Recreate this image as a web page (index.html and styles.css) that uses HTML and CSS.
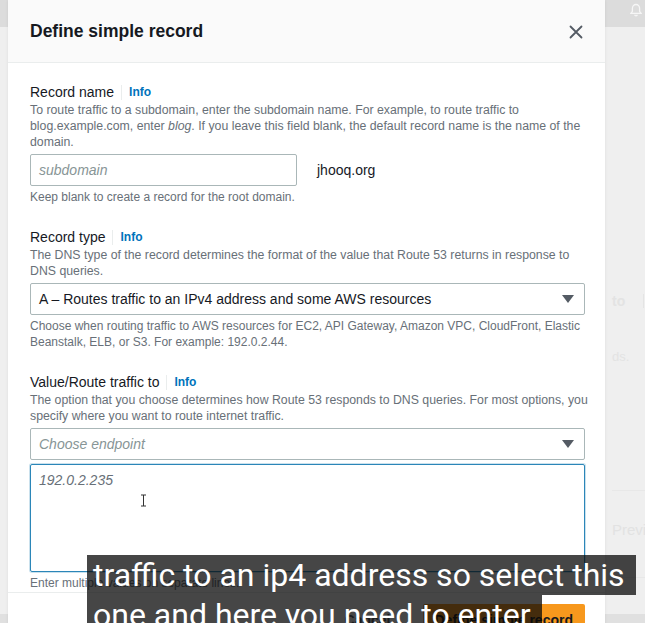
FILE: index.html
```html
<!DOCTYPE html>
<html lang="en">
<head>
<meta charset="utf-8">
<title>Define simple record</title>
<link rel="stylesheet" href="styles.css">
</head>
<body>
<div class="page">
  <div class="topbar">
    <svg class="bell" width="12" height="14" viewBox="0 0 12 14"><path d="M6 1.5c-2.2 0-3.6 1.7-3.6 3.8v3L1 10.3h10L9.6 8.3v-3C9.6 3.2 8.2 1.5 6 1.5z" fill="none" stroke="#f6f6f6" stroke-width="1.3"/><path d="M4.6 11.8c.3.7.8 1 1.4 1s1.1-.3 1.4-1" fill="none" stroke="#f6f6f6" stroke-width="1.3"/></svg>
  </div>
  <div class="ghost">
    <div class="ghost-label">to <span class="ghost-sep"></span></div>
    <div class="ghost-text">ds.</div>
    <div class="ghost-box">
      <div class="ghost-row">Previous</div>
    </div>
  </div>
  <div class="bottombar"></div>
</div>

<div class="modal">
  <div class="modal-header">
    <h1 class="modal-title">Define simple record</h1>
    <svg class="close" width="14" height="14" viewBox="0 0 14 14"><path d="M1.5 1.5l11 11M12.5 1.5l-11 11" stroke="#545b64" stroke-width="1.8" stroke-linecap="round"/></svg>
  </div>
  <div class="modal-body">
    <section class="field">
      <div class="label-row"><span class="label">Record name</span><span class="sep"></span><span class="info">Info</span></div>
      <p class="desc">To route traffic to a subdomain, enter the subdomain name. For example, to route traffic to<br>blog.example.com, enter <i>blog</i>. If you leave this field blank, the default record name is the name of the<br>domain.</p>
      <div class="name-row">
        <div class="input short"><span class="placeholder">subdomain</span></div>
        <span class="domain">jhooq.org</span>
      </div>
      <p class="hint">Keep blank to create a record for the root domain.</p>
    </section>

    <section class="field">
      <div class="label-row"><span class="label">Record type</span><span class="sep"></span><span class="info">Info</span></div>
      <p class="desc">The DNS type of the record determines the format of the value that Route 53 returns in response to<br>DNS queries.</p>
      <div class="input select"><span class="value">A – Routes traffic to an IPv4 address and some AWS resources</span><span class="caret"></span></div>
      <p class="hint">Choose when routing traffic to AWS resources for EC2, API Gateway, Amazon VPC, CloudFront, Elastic<br>Beanstalk, ELB, or S3. For example: 192.0.2.44.</p>
    </section>

    <section class="field">
      <div class="label-row"><span class="label">Value/Route traffic to</span><span class="sep"></span><span class="info">Info</span></div>
      <p class="desc">The option that you choose determines how Route 53 responds to DNS queries. For most options, you<br>specify where you want to route internet traffic.</p>
      <div class="input select"><span class="placeholder">Choose endpoint</span><span class="caret"></span></div>
      <div class="textarea">
        <span class="placeholder value-ph">192.0.2.235</span>
        <svg class="ibeam" width="7" height="13" viewBox="0 0 7 13"><path d="M1 1h5M1 12h5M3.5 1v11" stroke="#333" stroke-width="1"/></svg>
      </div>
      <p class="hint">Enter multiple values on separate lines.</p>
    </section>
  </div>
  <div class="modal-footer">
    <span class="btn-link">Cancel</span>
    <span class="btn-primary">Define simple record</span>
  </div>
</div>

<div class="captions">
  <span class="cap-line">traffic to an ip4 address so select this</span>
  <span class="cap-line">one and here you need to enter</span>
</div>
</body>
</html>
```

FILE: styles.css
```css
* { box-sizing: border-box; }
html, body {
  margin: 0;
  padding: 0;
  width: 645px;
  height: 623px;
  overflow: hidden;
}
body {
  background: #efefef;
  font-family: "Liberation Sans", Arial, sans-serif;
  color: #16191f;
  position: relative;
}

/* background page (dimmed) */
.page {
  height: 623px;
  display: flex;
  flex-direction: column;
  overflow: hidden;
}
.topbar {
  height: 27px;
  background: #dcdcdc;
  display: flex;
  justify-content: flex-end;
  align-items: flex-start;
  padding: 3px 3px 0 0;
}
.ghost {
  flex: 1;
  padding-left: 612px;
  color: #e3e3e3;
  font-size: 14px;
  font-weight: bold;
  overflow: hidden;
}
.ghost-label {
  margin-top: 266px;
  display: flex;
  align-items: center;
  gap: 18px;
  white-space: nowrap;
}
.ghost-sep {
  width: 1px;
  height: 14px;
  background: #e4e4e4;
}
.ghost-text {
  margin-top: 40px;
  font-weight: normal;
  font-size: 13px;
}
.ghost-box {
  margin-top: 126px;
  border-top: 1px solid #e8e8e8;
  border-bottom: 1px solid #e8e8e8;
  height: 88px;
  padding-top: 30px;
}
.ghost-row {
  white-space: nowrap;
  font-size: 15px;
  font-weight: normal;
  color: #e2e2e2;
}
.bottombar {
  height: 9px;
  background: #e0e0e0;
}

/* modal */
.modal {
  position: absolute;
  left: 8px;
  top: 0;
  width: 597px;
  height: 650px;
  background: #ffffff;
  box-shadow: 0 0 3px rgba(0, 0, 0, 0.08);
  display: flex;
  flex-direction: column;
}
.modal-header {
  height: 63px;
  background: #fafafa;
  border-bottom: 1px solid #eaeded;
  display: flex;
  align-items: center;
  justify-content: space-between;
  padding: 0 22px 0 22px;
}
.modal-title {
  margin: 0;
  font-size: 17.5px;
  font-weight: bold;
  line-height: 22px;
  padding-bottom: 1px;
}
.close {
  margin-top: 2px;
}
.modal-body {
  padding: 19px 20px 0 22px;
}
.field + .field {
  margin-top: 22px;
}
.label-row {
  display: flex;
  align-items: center;
  height: 20px;
}
.label {
  font-size: 14px;
  line-height: 20px;
}
.sep {
  width: 1px;
  height: 15px;
  background: #eaeded;
  margin: 0 7px 0 7px;
}
.info {
  font-size: 12px;
  font-weight: bold;
  color: #0073bb;
}
.desc, .hint {
  margin: 0;
  font-size: 12.3px;
  line-height: 16px;
  color: #687078;
  white-space: nowrap;
}
.hint {
  margin-top: 3px;
  font-size: 12px;
}
.name-row {
  display: flex;
  align-items: center;
  gap: 20px;
  margin-top: 4px;
}
.input {
  height: 32px;
  border: 1px solid #aab7b8;
  border-radius: 2px;
  display: flex;
  align-items: center;
  padding: 0 8px;
  font-size: 14px;
}
.input.short {
  width: 267px;
}
.select {
  margin-top: 4px;
  justify-content: space-between;
  padding-right: 10px;
}
.value {
  color: #16191f;
}
.placeholder {
  font-style: italic;
  color: #879596;
  font-size: 14px;
}
.value-ph {
  color: #687078;
}
.domain {
  font-size: 14px;
}
.caret {
  width: 0;
  height: 0;
  border-left: 6px solid transparent;
  border-right: 6px solid transparent;
  border-top: 8px solid #545b64;
}
.textarea {
  position: relative;
  margin-top: 4px;
  height: 108px;
  border: 1px solid #2b86b8;
  border-radius: 2px;
  box-shadow: 0 0 0 1px rgba(43, 134, 184, 0.25);
  padding: 7px 8px;
  line-height: 16px;
}
.ibeam {
  position: absolute;
  left: 109px;
  top: 29px;
}
.modal-footer {
  margin-top: 1px;
  border-top: 1px solid #eaeded;
  padding: 11px 20px 0 0;
  display: flex;
  justify-content: flex-end;
  align-items: flex-start;
  gap: 32px;
}
.btn-link {
  font-size: 14px;
  font-weight: bold;
  color: #545b64;
  line-height: 32px;
}
.btn-primary {
  background: #f7981d;
  border-radius: 2px;
  height: 32px;
  line-height: 32px;
  padding: 0 12px;
  font-size: 14px;
  font-weight: bold;
  color: #16191f;
}

/* video captions overlay */
.captions {
  position: absolute;
  left: 87px;
  top: 555px;
  display: flex;
  flex-direction: column;
  align-items: flex-start;
}
.cap-line {
  display: block;
  background: rgba(8, 8, 8, 0.75);
  color: #ffffff;
  font-family: Roboto, "Liberation Sans", sans-serif;
  font-size: 32px;
  line-height: 40px;
  padding: 0 11px 0 6px;
  white-space: nowrap;
}
```
